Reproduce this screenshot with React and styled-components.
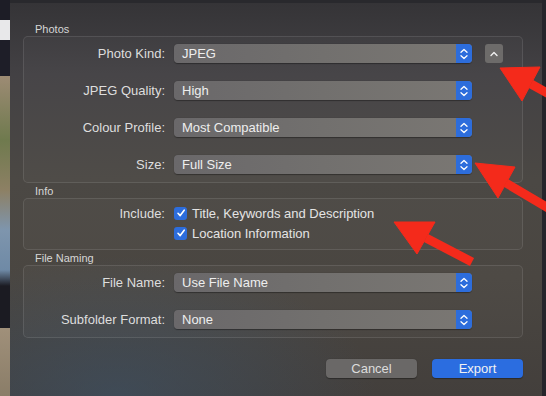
import React from 'react';
import styled, { createGlobalStyle } from 'styled-components';

const Global = createGlobalStyle`
  html, body {
    margin: 0;
    padding: 0;
    width: 546px;
    height: 396px;
    overflow: hidden;
    background: #1c1c22;
  }
  * { box-sizing: border-box; }
`;

const Screen = styled.div`
  position: relative;
  width: 546px;
  height: 396px;
  display: flex;
  font-family: "Liberation Sans", Arial, sans-serif;
  color: #e2e2e2;
`;

const PhotoStrip = styled.div`
  width: 10px;
  flex-shrink: 0;
  background: linear-gradient(180deg,
    #1d1d26 0px, #1d1d26 20px,
    #e8e8ea 20px, #e8e8ea 40px,
    #1e1e28 40px, #1e1e28 76px,
    #9d8b74 76px, #6f7a4e 140px, #8d8064 190px,
    #7e95ad 230px, #6f8aa6 270px,
    #1b1b22 286px, #1b1b22 328px,
    #a0907a 328px, #8a7d68 396px);
`;

const EdgeStrip = styled.div`
  width: 4px;
  flex-shrink: 0;
  background: #25252b;
`;

const Dialog = styled.div`
  flex: 1;
  display: flex;
  flex-direction: column;
  border-top: 3px solid #29292d;
  padding: 0 0 0 13px;
  background:
    radial-gradient(ellipse 260px 140px at 20% 100%, rgba(60, 84, 108, 0.55), rgba(60, 84, 108, 0) 100%),
    linear-gradient(180deg, #353437 0%, #434144 18%, #4b4844 45%, #4a4641 70%, #433f3c 100%);
`;

const SectionTitle = styled.div`
  height: ${p => p.$h}px;
  padding-left: 12px;
  display: flex;
  align-items: flex-end;
  padding-bottom: 1px;
  font-size: 11px;
  color: #d6d6d6;
`;

const Group = styled.div`
  width: 500px;
  border: 1px solid rgba(255, 255, 255, 0.1);
  border-radius: 5px;
  background: rgba(255, 255, 255, 0.025);
  padding: ${p => p.$pad};
  display: flex;
  flex-direction: column;
  gap: ${p => p.$gap}px;
`;

const Row = styled.div`
  display: flex;
  align-items: center;
  height: ${p => p.$h || 19}px;
`;

const Label = styled.div`
  width: 141px;
  margin-right: 9px;
  text-align: right;
  font-size: 13px;
  color: #dedede;
  white-space: nowrap;
`;

const Spacer = styled.div`
  width: 150px;
  flex-shrink: 0;
`;

const Select = styled.div`
  width: 298px;
  height: 19px;
  display: flex;
  align-items: center;
  border-radius: 4px;
  overflow: hidden;
  background: linear-gradient(90deg, #6a686a 0%, #72706e 50%, #7a7773 100%);
  box-shadow: 0 0.5px 1px rgba(0, 0, 0, 0.35);
`;

const SelectText = styled.span`
  flex: 1;
  padding-left: 8px;
  font-size: 13px;
  color: #eeeeee;
`;

const Stepper = styled.div`
  width: 16px;
  height: 100%;
  background: #2d6ddc;
  display: flex;
  align-items: center;
  justify-content: center;
`;

const DisclosureButton = styled.div`
  width: 18px;
  height: 19px;
  margin-left: 13px;
  border-radius: 3px;
  background: #6d6b6a;
  display: flex;
  align-items: center;
  justify-content: center;
`;

const Check = styled.div`
  width: 13px;
  height: 13px;
  margin-right: 5px;
  border-radius: 3px;
  background: #2d6ddc;
  display: flex;
  align-items: center;
  justify-content: center;
`;

const CheckText = styled.span`
  font-size: 13px;
  color: #e4e4e4;
`;

const Footer = styled.div`
  display: flex;
  justify-content: flex-end;
  gap: 15px;
  width: 500px;
  margin-top: 21px;
`;

const Button = styled.div`
  width: 91px;
  height: 19px;
  border-radius: 4px;
  display: flex;
  align-items: center;
  justify-content: center;
  font-size: 13px;
  color: ${p => (p.$primary ? '#f2f2f2' : '#dcdcdc')};
  background: ${p => (p.$primary ? '#2b6de0' : '#6a6867')};
  box-shadow: 0 0.5px 1px rgba(0, 0, 0, 0.35);
`;

const Overlay = styled.svg`
  position: absolute;
  left: 0;
  top: 0;
  pointer-events: none;
`;

const StepIcon = () => (
  <svg width="10" height="14" viewBox="0 0 10 14">
    <path d="M2 5.2 L5 2.4 L8 5.2 M2 8.8 L5 11.6 L8 8.8" fill="none" stroke="#fff" strokeWidth="1.3" strokeLinecap="round" strokeLinejoin="round" />
  </svg>
);

const UpIcon = () => (
  <svg width="10" height="8" viewBox="0 0 10 8">
    <path d="M2 5.5 L5 2.5 L8 5.5" fill="none" stroke="#f0f0f0" strokeWidth="1.4" strokeLinecap="round" strokeLinejoin="round" />
  </svg>
);

const CheckIcon = () => (
  <svg width="10" height="10" viewBox="0 0 10 10">
    <path d="M2 5.3 L4.2 7.6 L8.2 2.2" fill="none" stroke="#fff" strokeWidth="1.6" strokeLinecap="round" strokeLinejoin="round" />
  </svg>
);

const Popup = ({ value }) => (
  <Select>
    <SelectText>{value}</SelectText>
    <Stepper><StepIcon /></Stepper>
  </Select>
);

const arrows = [
  { head: '500,68 540,67 522,101', shaft: [531, 84, 560, 100] },
  { head: '475,163 515,167 498,198', shaft: [506, 183, 560, 215] },
  { head: '394,222 435,222 417,254', shaft: [426, 238, 472, 262] },
];

export default function App() {
  return (
    <>
      <Global />
      <Screen>
        <PhotoStrip />
        <Dialog>
          <SectionTitle $h={33}>Photos</SectionTitle>
          <Group $pad="7px 0 8px 0" $gap={18}>
            <Row>
              <Label>Photo Kind:</Label>
              <Popup value="JPEG" />
              <DisclosureButton><UpIcon /></DisclosureButton>
            </Row>
            <Row>
              <Label>JPEG Quality:</Label>
              <Popup value="High" />
            </Row>
            <Row>
              <Label>Colour Profile:</Label>
              <Popup value="Most Compatible" />
            </Row>
            <Row>
              <Label>Size:</Label>
              <Popup value="Full Size" />
            </Row>
          </Group>
          <SectionTitle $h={15}>Info</SectionTitle>
          <Group $pad="6px 0 8px 0" $gap={4}>
            <Row $h={16}>
              <Label>Include:</Label>
              <Check><CheckIcon /></Check>
              <CheckText>Title, Keywords and Description</CheckText>
            </Row>
            <Row $h={16}>
              <Spacer />
              <Check><CheckIcon /></Check>
              <CheckText>Location Information</CheckText>
            </Row>
          </Group>
          <SectionTitle $h={15}>File Naming</SectionTitle>
          <Group $pad="7px 0 8px 0" $gap={18}>
            <Row>
              <Label>File Name:</Label>
              <Popup value="Use File Name" />
            </Row>
            <Row>
              <Label>Subfolder Format:</Label>
              <Popup value="None" />
            </Row>
          </Group>
          <Footer>
            <Button>Cancel</Button>
            <Button $primary>Export</Button>
          </Footer>
        </Dialog>
        <EdgeStrip />
        <Overlay width="546" height="396" viewBox="0 0 546 396">
          {arrows.map((a, i) => (
            <g key={i} fill="#f42a1b" stroke="#f42a1b">
              <polygon points={a.head} strokeWidth="1" strokeLinejoin="round" />
              <line x1={a.shaft[0]} y1={a.shaft[1]} x2={a.shaft[2]} y2={a.shaft[3]} strokeWidth="9" />
            </g>
          ))}
        </Overlay>
      </Screen>
    </>
  );
}
